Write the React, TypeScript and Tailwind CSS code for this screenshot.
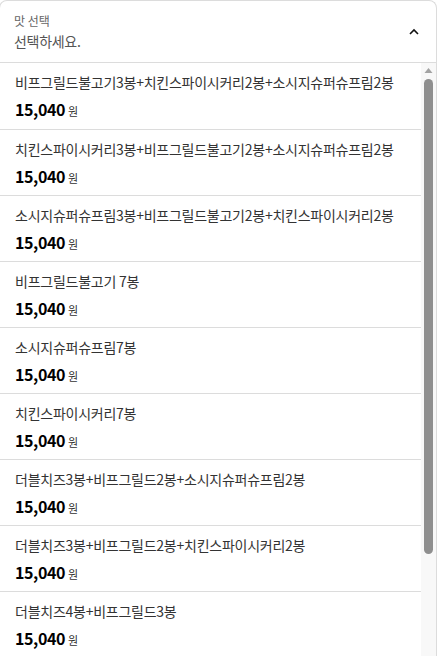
import React from "react";

const items = [
  "비프그릴드불고기3봉+치킨스파이시커리2봉+소시지슈퍼슈프림2봉",
  "치킨스파이시커리3봉+비프그릴드불고기2봉+소시지슈퍼슈프림2봉",
  "소시지슈퍼슈프림3봉+비프그릴드불고기2봉+치킨스파이시커리2봉",
  "비프그릴드불고기 7봉",
  "소시지슈퍼슈프림7봉",
  "치킨스파이시커리7봉",
  "더블치즈3봉+비프그릴드2봉+소시지슈퍼슈프림2봉",
  "더블치즈3봉+비프그릴드2봉+치킨스파이시커리2봉",
  "더블치즈4봉+비프그릴드3봉",
];

export default function App() {
  return (
    <div
      className="h-screen w-[438px] overflow-hidden bg-white"
      style={{ fontFamily: '"Noto Sans CJK KR", "Noto Sans", sans-serif' }}
    >
      <div className="-ml-px w-[438px] rounded-t-lg border border-b-0 border-[#dcdcdc]">
        <div className="flex h-[61px] items-center justify-between pl-[14px] pr-[16px]">
          <div className="flex flex-col">
            <span className="text-[12px] leading-[16px] text-[#666]">맛 선택</span>
            <span className="mt-[2px] text-[14px] leading-[20px] tracking-[-0.3px] text-[#555]">선택하세요.</span>
          </div>
          <svg width="12" height="12" viewBox="0 0 12 12" fill="none">
            <path d="M2 8 L6 4 L10 8" stroke="#111" strokeWidth="1.6" />
          </svg>
        </div>
        <div className="flex h-[600px] border-t border-[#dcdcdc]">
          <div className="flex-1">
            {items.map((name, i) => (
              <div
                key={i}
                className={`flex h-[66px] flex-col justify-center px-[15px] ${i > 0 ? "border-t border-[#dcdcdc]" : ""}`}
              >
                <div className="text-[14px] leading-[20px] tracking-[-0.25px] text-[#333]">{name}</div>
                <div className="mt-[6px] flex items-baseline">
                  <span className="text-[16px] font-bold leading-[22px] tracking-[-0.4px] text-black">15,040</span>
                  <span className="ml-[3px] text-[11px] text-[#333]">원</span>
                </div>
              </div>
            ))}
          </div>
          <div className="flex w-[15px] flex-col items-center bg-[#f8f8f8]">
            <svg width="9" height="7" viewBox="0 0 9 7" className="mt-[4px]">
              <path d="M4.5 1 L8.5 6 L0.5 6 Z" fill="#a3a3a3" />
            </svg>
            <div className="mt-[5px] h-[475px] w-[9px] rounded-full bg-[#8f8f8f]" />
          </div>
        </div>
      </div>
    </div>
  );
}
